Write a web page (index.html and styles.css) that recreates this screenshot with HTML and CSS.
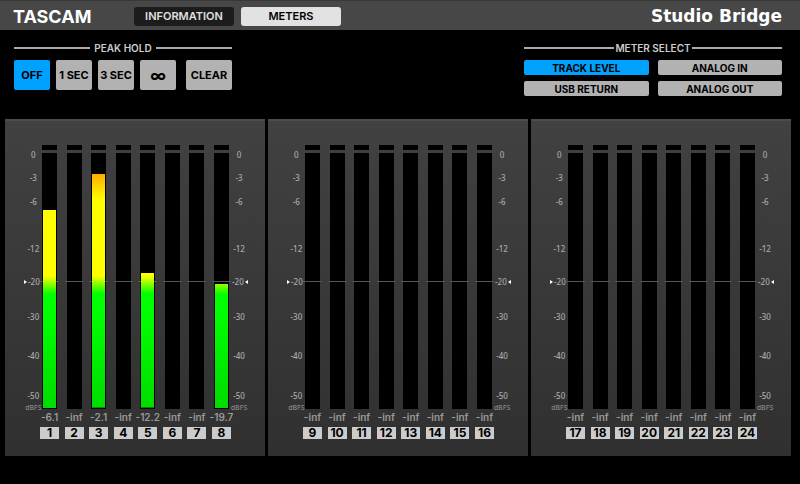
FILE: index.html
```
<!DOCTYPE html>
<html lang="en">
<head>
    <meta charset="UTF-8">
    <meta name="viewport" content="width=device-width, initial-scale=1.0">
    <title>Studio Bridge</title>
    <link rel="stylesheet" href="styles.css">
</head>
<body>
    <header class="topbar">
        <div class="brand">TASCAM</div>
        <nav class="tabs">
            <button type="button" class="tab">INFORMATION</button>
            <button type="button" class="tab active">METERS</button>
        </nav>
        <h1 class="product">Studio Bridge</h1>
    </header>

    <div class="controls">
        <section class="peak-hold">
            <h2 class="group-title">PEAK HOLD</h2>
            <div class="peak-buttons">
                <button type="button" class="key active">OFF</button>
                <button type="button" class="key">1 SEC</button>
                <button type="button" class="key">3 SEC</button>
                <button type="button" class="key infinity">∞</button>
                <button type="button" class="key clear">CLEAR</button>
            </div>
        </section>

        <section class="meter-select">
            <h2 class="group-title tight">METER SELECT</h2>
            <div class="select-buttons">
                <button type="button" class="key active">TRACK LEVEL</button>
                <button type="button" class="key">ANALOG IN</button>
                <button type="button" class="key">USB RETURN</button>
                <button type="button" class="key">ANALOG OUT</button>
            </div>
        </section>
    </div>

    <main class="banks" id="banks">
        <!-- Meter banks are inserted here -->
    </main>

    <script>
        const channelsPerBank = 8;
        const channelCount = 24;

        // fill is the height of the bar in percent of the track
        const levels = {
            1: { value: '-6.1', fill: 78 },
            3: { value: '-2.1', fill: 92 },
            5: { value: '-12.2', fill: 53 },
            8: { value: '-19.7', fill: 49 }
        };

        const marks = ['0', '-3', '-6', '-12', '-20', '-30', '-40', '-50', 'dBFS'];

        function scale(side) {
            const items = marks.map(mark => {
                const name = mark === '-20' ? 'reference' : mark === 'dBFS' ? 'unit' : '';
                return `<li class="${name}">${mark}</li>`;
            });
            return `<ul class="scale ${side}">${items.join('')}</ul>`;
        }

        function strip(channel) {
            const level = levels[channel] || { value: '-inf', fill: 0 };
            return `
                <div class="strip">
                    <div class="lamp"></div>
                    <div class="track"><div class="fill" style="height: ${level.fill}%"></div></div>
                    <div class="value">${level.value}</div>
                    <div class="channel">${channel}</div>
                </div>
            `;
        }

        const banks = document.getElementById('banks');
        for (let first = 1; first <= channelCount; first += channelsPerBank) {
            const bank = document.createElement('section');
            bank.className = 'bank';
            let strips = '';
            for (let i = 0; i < channelsPerBank; i++) {
                strips += strip(first + i);
            }
            bank.innerHTML = scale('left') + `<div class="strips">${strips}</div>` + scale('right');
            banks.appendChild(bank);
        }
    </script>
</body>
</html>
```
FILE: styles.css
```
* {
    box-sizing: border-box;
}
body {
    margin: 0;
    background: #000;
    color: #ccc;
    font-family: Inter, "Liberation Sans", sans-serif;
}
button {
    padding: 0;
    border: none;
    border-radius: 2px;
    font-family: inherit;
    font-size: 11px;
    font-weight: 700;
    white-space: nowrap;
}

/* top bar */
.topbar {
    display: flex;
    align-items: center;
    height: 30px;
    padding: 1px 18px 0 13px;
    background: #474747;
    border-top: 1px solid #383838;
}
.brand {
    width: 121px;
    color: #fff;
    font-size: 18px;
    font-weight: 700;
}
.tabs {
    display: flex;
    gap: 7px;
}
.tab {
    width: 100px;
    height: 19px;
    border-radius: 3px;
    background: #1c1c1c;
    color: #e0e0e0;
    font-weight: 600;
}
.tab.active {
    background: #e2e2e2;
    color: #000;
}
.product {
    margin: 0 0 0 auto;
    color: #fff;
    font-family: "DejaVu Sans", sans-serif;
    font-size: 17px;
    font-weight: 700;
}

/* controls */
.controls {
    display: flex;
    justify-content: space-between;
    padding: 12px 18px 23px 14px;
}
.group-title {
    display: flex;
    align-items: center;
    gap: 4px;
    margin: 0 0 6px;
    font-size: 10px;
    font-weight: 600;
    line-height: 12px;
}
.group-title::before,
.group-title::after {
    content: "";
    flex: 1;
    height: 2px;
    background: #aaa;
}
.tight {
    gap: 1px;
}
.peak-hold {
    width: 218px;
}
.meter-select {
    width: 258px;
}
.key {
    background: #b2b2b2;
    color: #000;
}
.key.active {
    background: #00a2ff;
}
.peak-buttons {
    display: flex;
    gap: 6px;
}
.peak-buttons .key {
    width: 36px;
    height: 30px;
}
.peak-buttons .infinity {
    font-size: 16px;
}
.peak-buttons .clear {
    width: 46px;
    margin-left: auto;
}
.select-buttons {
    display: grid;
    grid-template-columns: 1fr 1fr;
    gap: 6px 9px;
}
.select-buttons .key {
    height: 15px;
    font-size: 10px;
}

/* meter banks */
.banks {
    display: grid;
    grid-template-columns: repeat(3, 1fr);
    gap: 3px;
    padding: 0 9px 0 5px;
}
.bank {
    display: grid;
    grid-template-columns: 37px 1fr 36px;
    padding: 24px 0 17px;
    background: linear-gradient(#414141, #303030);
    border-top: 2px solid #4c4c4c;
}
.strips {
    display: flex;
    justify-content: space-between;
}
.strip {
    display: flex;
    flex-direction: column;
    align-items: center;
    width: 15px;
}
.lamp {
    width: 15px;
    height: 5px;
    margin-bottom: 3px;
    background: #000;
}
.track {
    position: relative;
    display: flex;
    align-items: flex-end;
    width: 15px;
    height: 256px;
    padding: 1px;
    background: #000;
}
/* line at -20 dBFS, behind the bar */
.track::before {
    content: "";
    position: absolute;
    top: 50%;
    left: -2px;
    right: -2px;
    height: 1px;
    background: #555;
}
.fill {
    position: relative;
    width: 100%;
    background: linear-gradient(#ff5000, #ffae00 21px, #ff0 46px, #ff0 122px, #0f0 140px, #0f0 160px, #00dc00) bottom / 100% 254px no-repeat;
}
.value {
    margin-top: 3px;
    color: #999;
    font-size: 10px;
    font-weight: 600;
    line-height: 11px;
    white-space: nowrap;
}
.channel {
    width: 19px;
    margin-top: 4px;
    background: #ccc;
    color: #000;
    font-size: 12px;
    font-weight: 700;
    line-height: 12px;
    text-align: center;
}

/* dB scale, each row ends at its mark */
.scale {
    display: grid;
    grid-template-rows: 15px 23px 24px 47px 33px 35px 39px 40px 12px;
    align-items: end;
    align-content: start;
    margin: 0;
    padding: 0;
    color: #aaa;
    font-family: "Noto Sans", "Open Sans", sans-serif;
    font-size: 8px;
    font-weight: 500;
    line-height: 10px;
    list-style: none;
    text-align: center;
}
.left {
    padding-left: 19px;
}
.right {
    padding-right: 16px;
}
.unit {
    color: #888;
    font-size: 7px;
}
.reference {
    display: flex;
    align-items: center;
    justify-content: flex-end;
    gap: 1px;
    padding-right: 3px;
}
.right .reference {
    flex-direction: row-reverse;
    padding: 0 0 0 3px;
}
.reference::before {
    content: "";
    border: 2px solid transparent;
    border-left: 3px solid #fff;
    border-right: none;
}
.right .reference::before {
    border-left: none;
    border-right: 3px solid #fff;
}
```
